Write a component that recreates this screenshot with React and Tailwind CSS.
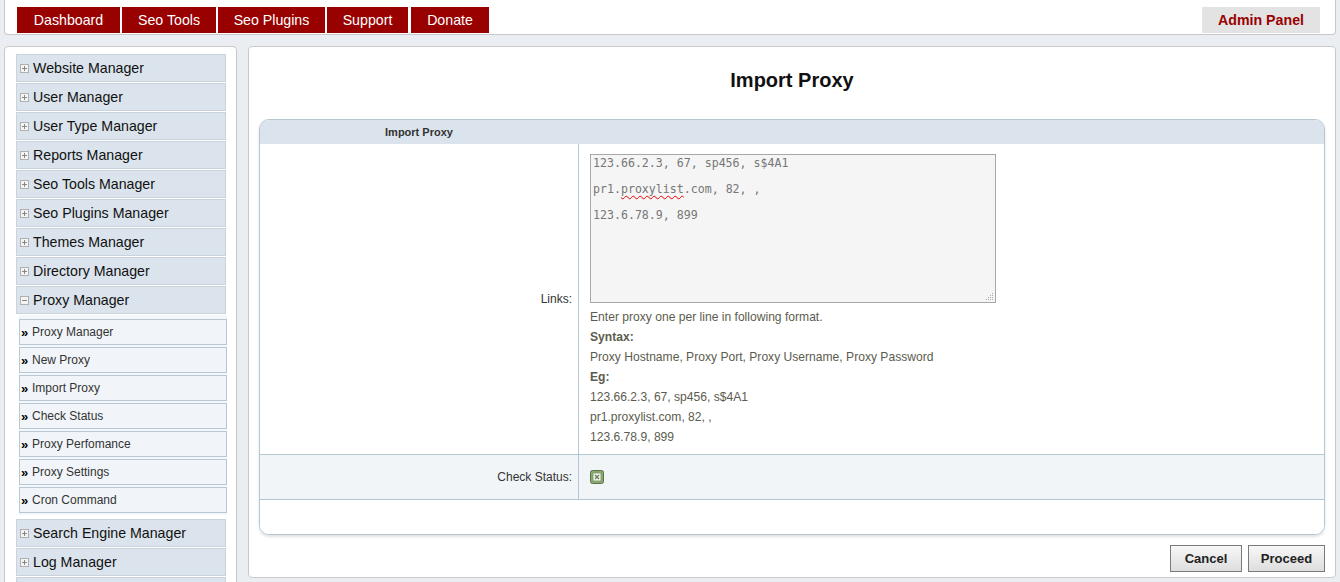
import React from "react";

const NAV = [
  ["Dashboard", "w-[103px]"],
  ["Seo Tools", "w-[94px]"],
  ["Seo Plugins", "w-[107px]"],
  ["Support", "w-[81px]"],
  ["Donate", "w-[78px]"],
];

const TOP_MENU = [
  "Website Manager",
  "User Manager",
  "User Type Manager",
  "Reports Manager",
  "Seo Tools Manager",
  "Seo Plugins Manager",
  "Themes Manager",
  "Directory Manager",
];

const SUB = [
  "Proxy Manager",
  "New Proxy",
  "Import Proxy",
  "Check Status",
  "Proxy Perfomance",
  "Proxy Settings",
  "Cron Command",
];

function PlusBox({ minus }) {
  return (
    <svg width="9" height="9" viewBox="0 0 9 9" className="shrink-0">
      <rect x="0.5" y="0.5" width="8" height="8" fill="#f4f4f4" stroke="#b0b0b0" />
      <line x1="2" y1="4.5" x2="7" y2="4.5" stroke="#888" strokeWidth="1" />
      {!minus && <line x1="4.5" y1="2" x2="4.5" y2="7" stroke="#888" strokeWidth="1" />}
    </svg>
  );
}

function MenuItem({ label, minus }) {
  return (
    <div className="h-[28px] mb-[1px] bg-[#dbe4ec] border border-[#c9d3dc] flex items-center pl-[3px] gap-[4px] text-[14.2px] text-[#111]">
      <PlusBox minus={minus} />
      <span className="pt-[2px]">{label}</span>
    </div>
  );
}

export default function App() {
  return (
    <div
      className="w-[1340px] h-[582px] overflow-hidden bg-[#eaeef3] px-[4px]"
      style={{ fontFamily: '"Liberation Sans", Arial, sans-serif' }}
    >
      {/* Header */}
      <div className="h-[35px] bg-white border border-t-0 border-[#c8c8c8] rounded-b-[4px] flex items-start pt-[7px] pl-[12px] pr-[15px]">
        <div className="flex gap-[2px]">
          {NAV.map(([t, w], i) => (
            <div
              key={t}
              className={`${w} h-[26px] pt-[2px] bg-[#990000] text-white text-[14.2px] flex items-center justify-center ${i === 4 ? "ml-[1px]" : ""}`}
            >
              {t}
            </div>
          ))}
        </div>
        <div className="ml-auto w-[118px] h-[26px] pt-[2px] bg-[#e3e3e3] text-[#990000] font-bold text-[14.2px] flex items-center justify-center">
          Admin Panel
        </div>
      </div>

      <div className="flex gap-[11px] mt-[11px]">
        {/* Sidebar */}
        <div className="w-[233px] h-[560px] shrink-0 bg-white border border-[#c8c8c8] rounded-[4px] pt-[7px] pl-[11px] pr-[10px]">
          {TOP_MENU.map((m) => (
            <MenuItem key={m} label={m} />
          ))}
          <MenuItem label="Proxy Manager" minus />
          <div className="flex flex-col gap-[2px] ml-[3px] mr-[-1px] bg-[#f4f7fa] pt-[4px] pb-[2px] mb-[4px]">
            {SUB.map((s) => (
              <div
                key={s}
                className="h-[26px] bg-[#f1f5f9] border border-[#b8c7d4] flex items-center pl-[1px] text-[12px] text-[#333]"
              >
                <span className="font-bold text-black text-[13px] w-[11px] text-left leading-none">»</span>
                <span>{s}</span>
              </div>
            ))}
          </div>
          <MenuItem label="Search Engine Manager" />
          <MenuItem label="Log Manager" />
          <div className="h-[28px] bg-[#dbe4ec] border border-[#c9d3dc]" />
        </div>

        {/* Main */}
        <div className="w-[1088px] h-[532px] shrink-0 bg-white border border-[#c8c8c8] rounded-[4px] px-[10px]">
          <div className="pt-[21px] leading-[24px] text-[20px] font-bold text-center text-[#111] mb-[27px]">
            Import Proxy
          </div>

          <div className="border border-[#b5c7d3] rounded-[10px] overflow-hidden shadow-[0_2px_3px_rgba(0,0,0,0.12)]">
            <div className="h-[24px] bg-[#dbe4ec] flex">
              <div className="w-[318px] flex items-center justify-center text-[11px] font-bold text-[#333]">
                Import Proxy
              </div>
            </div>

            {/* Links row */}
            <div className="flex h-[310px]">
              <div className="w-[318px] flex items-center justify-end pr-[6px] text-[12px] text-[#333]">
                Links:
              </div>
              <div className="flex-1 border-l border-[#b5c7d3] pl-[11px] pt-[10px]">
                <div
                  className="relative w-[406px] h-[149px] bg-[#f5f5f5] border border-[#a8a8a8] pl-[2px] pt-[2px] text-[11.6px] leading-[13px] text-[#777] whitespace-pre"
                  style={{ fontFamily: '"DejaVu Sans Mono", "Liberation Mono", monospace' }}
                >
                  <div>123.66.2.3, 67, sp456, s$4A1</div>
                  <div>&nbsp;</div>
                  <div>
                    pr1.<span className="underline decoration-wavy decoration-[#e00] decoration-[1px] underline-offset-[2px]">proxylist</span>.com, 82, ,
                  </div>
                  <div>&nbsp;</div>
                  <div>123.6.78.9, 899</div>
                  <svg className="absolute right-[1px] bottom-[1px]" width="9" height="9" viewBox="0 0 9 9">
                    <g fill="#aaa">
                      <rect x="7" y="1" width="1" height="1" />
                      <rect x="5" y="3" width="1" height="1" />
                      <rect x="7" y="3" width="1" height="1" />
                      <rect x="3" y="5" width="1" height="1" />
                      <rect x="5" y="5" width="1" height="1" />
                      <rect x="7" y="5" width="1" height="1" />
                      <rect x="1" y="7" width="1" height="1" />
                      <rect x="3" y="7" width="1" height="1" />
                      <rect x="5" y="7" width="1" height="1" />
                      <rect x="7" y="7" width="1" height="1" />
                    </g>
                  </svg>
                </div>
                <div className="mt-[4px] text-[12.1px] leading-[20px] text-[#5c5c4e]">
                  <div>Enter proxy one per line in following format.</div>
                  <div className="font-bold">Syntax:</div>
                  <div>Proxy Hostname, Proxy Port, Proxy Username, Proxy Password</div>
                  <div className="font-bold">Eg:</div>
                  <div>123.66.2.3, 67, sp456, s$4A1</div>
                  <div>pr1.proxylist.com, 82, ,</div>
                  <div>123.6.78.9, 899</div>
                </div>
              </div>
            </div>

            {/* Check status row */}
            <div className="flex h-[45px] border-t border-[#b5c7d3] bg-[#f2f5f8]">
              <div className="w-[318px] flex items-center justify-end pr-[6px] text-[12px] text-[#333]">
                Check Status:
              </div>
              <div className="flex-1 border-l border-[#b5c7d3] pl-[11px] flex items-center">
                <svg width="14" height="14" viewBox="0 0 14 14">
                  <rect x="0.5" y="0.5" width="13" height="13" rx="2" fill="#8aab6e" stroke="#5d6f4d" />
                  <rect x="3" y="3" width="8" height="8" fill="#f2f5ee" stroke="#7a9464" strokeWidth="0.8" />
                  <path d="M5 5 L9 9 M9 5 L5 9" stroke="#6a7d5c" strokeWidth="1.4" />
                </svg>
              </div>
            </div>

            <div className="h-[35px] border-t border-[#b5c7d3] bg-white" />
          </div>

          <div className="flex justify-end gap-[6px] mt-[10px]">
            <div className="w-[72px] h-[27px] border border-[#7a7a7a] bg-gradient-to-b from-[#f7f7f7] to-[#dedede] flex items-center justify-center text-[13px] font-bold text-[#222]">
              Cancel
            </div>
            <div className="w-[77px] h-[27px] border border-[#7a7a7a] bg-gradient-to-b from-[#f7f7f7] to-[#dedede] flex items-center justify-center text-[13px] font-bold text-[#222]">
              Proceed
            </div>
          </div>
        </div>
      </div>
    </div>
  );
}
